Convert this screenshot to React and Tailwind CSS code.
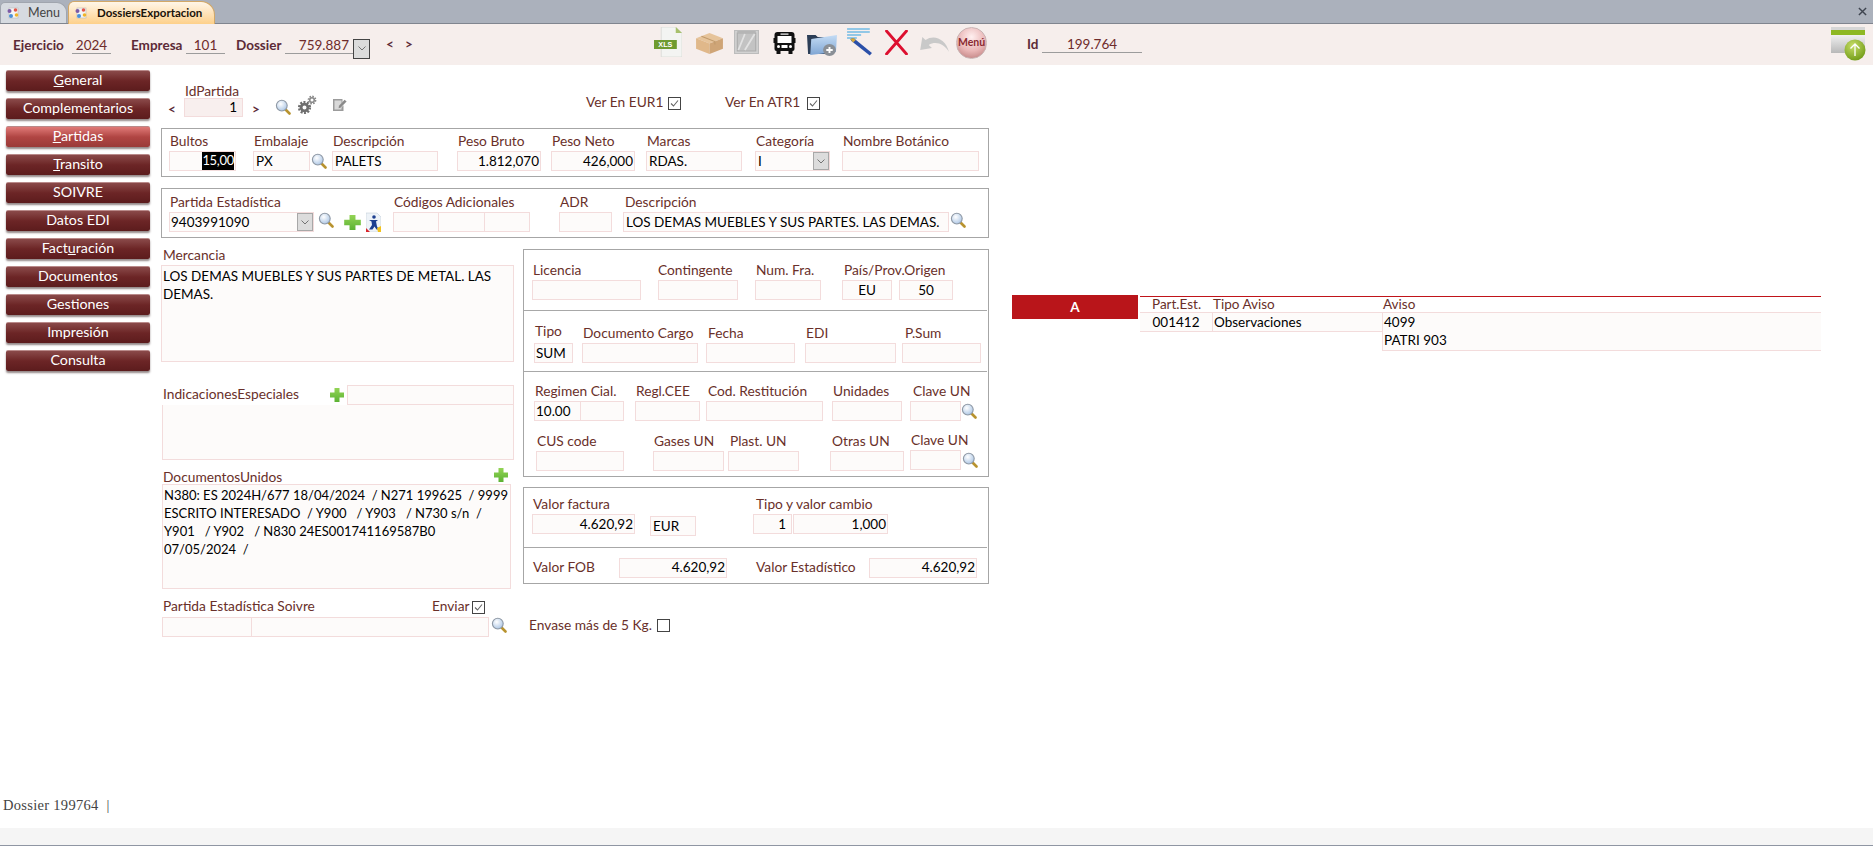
import React from 'react'

const NAV = [
  ['', 'G', 'eneral'], ['Complementarios'], ['', 'P', 'artidas'], ['', 'T', 'ransito'], ['SOIVRE'], ['Datos EDI'],
  ['Fact', 'u', 'ración'], ['Documentos'], ['Gestiones'], ['Impresión'], ['Consulta'],
]

function Lens() {
  return (
    <svg viewBox="0 0 16 16" className="w-[16px] h-[16px] shrink-0">
      <defs>
        <radialGradient id="lensg" cx="40%" cy="35%" r="70%">
          <stop offset="0" stopColor="#ffffff" />
          <stop offset="1" stopColor="#a9c4e4" />
        </radialGradient>
      </defs>
      <line x1="10" y1="10" x2="14.5" y2="14.5" stroke="#b8932f" strokeWidth="2.6" strokeLinecap="round" />
      <circle cx="6.8" cy="6.6" r="5.4" fill="url(#lensg)" stroke="#8f99a5" strokeWidth="1.1" />
    </svg>
  )
}

function GreenPlus({ className = 'w-[16px] h-[16px]' }) {
  return (
    <svg viewBox="0 0 16 16" preserveAspectRatio="none" className={'shrink-0 ' + className}>
      <defs>
        <linearGradient id="plusg" x1="0" y1="0" x2="0" y2="1">
          <stop offset="0" stopColor="#93d455" />
          <stop offset="1" stopColor="#5cb233" />
        </linearGradient>
      </defs>
      <path d="M5.5 1h5v4.5H15v5h-4.5V15h-5v-4.5H1v-5h4.5z" fill="url(#plusg)" />
    </svg>
  )
}

function Gears() {
  return (
    <svg viewBox="0 0 20 20" className="w-[20px] h-[20px] shrink-0">
      <circle cx="7.5" cy="12.5" r="5.5" fill="none" stroke="#6f6f6f" strokeWidth="2.2" strokeDasharray="2 1.46" />
      <circle cx="7.5" cy="12.5" r="3.4" fill="none" stroke="#6f6f6f" strokeWidth="2.8" />
      <circle cx="15" cy="5" r="3.6" fill="none" stroke="#8a8a8a" strokeWidth="1.6" strokeDasharray="1.6 1.2" />
      <circle cx="15" cy="5" r="2.3" fill="none" stroke="#8a8a8a" strokeWidth="1.6" />
    </svg>
  )
}

function EditIcon() {
  return (
    <svg viewBox="0 0 15 15" className="w-[15px] h-[15px] shrink-0">
      <path d="M1 2h9.5v3L7 9l-.6 2.4L9 10.8l2.5-2.5V14H1z" fill="#9b9b9b" />
      <rect x="2.5" y="3.5" width="7" height="9" fill="#d9d9d9" />
      <path d="M6.6 11.3 7 8.8l5.6-6 2 1.8-5.8 6z" fill="#8a8a8a" />
    </svg>
  )
}

function AgencyLogo() {
  return (
    <svg viewBox="0 0 15 20" className="w-[15px] h-[20px] shrink-0">
      <path d="M0 1h11l4 4v15H0z" fill="#eef3f8" stroke="#b9c5d2" strokeWidth="0.5" />
      <circle cx="8" cy="5" r="1.8" fill="#1d3f8f" />
      <path d="M3 8h9l-2 1.5 1 5 2 3h-2.5l-2-3-2 3H3l3-4.5-.5-3.5z" fill="#1d3f8f" />
      <path d="M0 16l4 4H0z" fill="#d8262c" />
      <path d="M11 16l4-2v6h-3z" fill="#f2c21b" />
    </svg>
  )
}

function TabIcon() {
  return (
    <svg viewBox="0 0 14 14" className="w-[14px] h-[14px] shrink-0">
      <rect x="3" y="2" width="9" height="10" fill="#f4f4f4" stroke="#b9b9b9" strokeWidth="0.6" />
      <circle cx="3.5" cy="5" r="2" fill="#7c5aa6" />
      <circle cx="9.5" cy="4" r="1.8" fill="#e2574c" />
      <circle cx="10.5" cy="9" r="1.8" fill="#f0b429" />
      <circle cx="5" cy="10" r="2" fill="#4a90d9" />
    </svg>
  )
}

function CheckBox({ on, className = '' }) {
  return (
    <div className={'w-[13px] h-[13px] border border-[#444] bg-white shrink-0 flex items-center justify-center ' + className}>
      {on && (
        <svg viewBox="0 0 11 11" className="w-[11px] h-[11px]">
          <path d="M2 5.5 4.5 8 9 2.5" fill="none" stroke="#666" strokeWidth="1.1" />
        </svg>
      )}
    </div>
  )
}

function DropBtn({ dark }) {
  return (
    <div className={'h-full shrink-0 flex items-center justify-center bg-[#dcdcdc] ' + (dark ? 'w-[17px] border border-[#444]' : 'w-[16px] border border-[#a8a8a8]')}>
      <svg viewBox="0 0 8 5" className="w-[8px] h-[5px]">
        <path d="M.5.5 4 4 7.500.5" fill="none" stroke="#666" strokeWidth="0.9" />
      </svg>
    </div>
  )
}

// campo de Access: caja rosa pálido
function Inp({ children, className = '' }) {
  return (
    <div className={'h-[20px] border border-[#f3dcdc] bg-[#fdfbfa] text-black flex items-center whitespace-nowrap overflow-hidden ' + className}>
      {children}
    </div>
  )
}

function Label({ children, className = '' }) {
  return <div className={'text-[#69302a] text-[13.75px] whitespace-nowrap ' + className}>{children}</div>
}

function Field({ label, className = '', inpClass = '', children, labelClass = 'pl-[1px]' }) {
  return (
    <div className={'shrink-0 ' + className}>
      <Label className={'h-[14px] leading-[8px] ' + labelClass}>{label}</Label>
      <Inp className={inpClass}>{children}</Inp>
    </div>
  )
}

function HeadField({ children, className = '' }) {
  return <div className={'h-[17px] border-b border-[#9c9c9c] text-[#6e2b2b] leading-[17px] ' + className}>{children}</div>
}

function Divider() {
  return <div className="w-[463px] h-px bg-[#a8a8a8]" />
}

function Toolbar() {
  return (
    <div className="ml-[241px] self-start flex items-start shrink-0 font-normal">
      <svg viewBox="0 0 27 30" preserveAspectRatio="none" className="mt-[3px] w-[28px] h-[30px] shrink-0">
        <path d="M7 0h14l6 6v24H7z" fill="#f3f4f2" stroke="#d4d6d2" strokeWidth="0.7" />
        <path d="M21 0l6 6h-6z" fill="#a7c06c" />
        <rect x="0" y="13" width="22" height="9" fill="#6f9b2f" />
        <text x="11" y="20.500" textAnchor="middle" fontSize="7" fontWeight="700" fill="#fff" fontFamily="Liberation Sans, sans-serif">XLS</text>
      </svg>
      <svg viewBox="0 0 27 24" preserveAspectRatio="none" className="mt-[8px] ml-[13px] w-[29px] h-[23px] shrink-0">
        <path d="M13.500 1 26 6.500 13.500 12 1 6.500z" fill="#e6c49b" />
        <path d="M1 6.500 13.500 12v11L1 17.500z" fill="#e0b88a" />
        <path d="M26 6.500 13.500 12v11L26 17.500z" fill="#cfa577" />
        <path d="M6 4.500 18.500 10v3" fill="none" stroke="#c09a6c" strokeWidth="1" />
      </svg>
      <svg viewBox="0 0 23 24" preserveAspectRatio="none" className="mt-[6px] ml-[10px] w-[25px] h-[24px] shrink-0">
        <rect x="0.500" y="0.500" width="22" height="23" fill="#d2d2d2" stroke="#bcbcbc" />
        <rect x="3" y="3" width="17" height="18" fill="#c3c3c3" stroke="#ababab" />
        <path d="M4 20 10 4M10 20 19 4" stroke="#e2e2e2" strokeWidth="1.6" />
        <rect x="3" y="1" width="17" height="2" fill="#b5b5b5" />
      </svg>
      <svg viewBox="0 0 22 23" className="mt-[7px] ml-[14px] w-[23px] h-[23px] shrink-0">
        <path d="M4 1h14a3 3 0 0 1 3 3v14a2 2 0 0 1-2 2H3a2 2 0 0 1-2-2V4a3 3 0 0 1 3-3z" fill="#111" />
        <rect x="0" y="7" width="2" height="5" fill="#111" />
        <rect x="20" y="7" width="2" height="5" fill="#111" />
        <rect x="4" y="5" width="14" height="7" fill="#fff" />
        <rect x="7" y="2.500" width="8" height="1.200" fill="#fff" />
        <rect x="8" y="14" width="6" height="3" fill="#fff" />
        <circle cx="5" cy="15.500" r="1.500" fill="#fff" />
        <circle cx="17" cy="15.500" r="1.500" fill="#fff" />
        <rect x="3" y="20" width="4" height="3" fill="#111" />
        <rect x="15" y="20" width="4" height="3" fill="#111" />
      </svg>
      <svg viewBox="0 0 28 24" preserveAspectRatio="none" className="mt-[8px] ml-[11px] w-[30px] h-[24px] shrink-0">
        <defs>
          <linearGradient id="foldg" x1="0" y1="0" x2="0" y2="1">
            <stop offset="0" stopColor="#c4dcf5" />
            <stop offset="1" stopColor="#7fa5d3" />
          </linearGradient>
        </defs>
        <path d="M0 3h8l2 2h11v17H1z" fill="#2c3e57" />
        <path d="M3 23 4 7l24-4-1 17z" fill="url(#foldg)" />
        <circle cx="21" cy="18" r="6" fill="#8a8f96" />
        <path d="M18 18h6M21 15v6" stroke="#fff" strokeWidth="1.800" />
      </svg>
      <svg viewBox="0 0 25 28" preserveAspectRatio="none" className="mt-[4px] ml-[9px] w-[27px] h-[28px] shrink-0">
        <path d="M1 1h21M1 4h21M1 7h13M1 10h9" stroke="#2f9fe0" strokeWidth="1.100" />
        <path d="M4 11l3-1 17 15-2 2.500L5 13z" fill="#2b4fa8" />
        <path d="M4 11l3-1 2 2-2.500 2.500z" fill="#d6a93a" />
      </svg>
      <svg viewBox="0 0 24 25" className="mt-[6px] ml-[11px] w-[25px] h-[25px] shrink-0">
        <path d="M2 1 22 24M22 1 2 24" stroke="#dd0f2f" strokeWidth="2.800" strokeLinecap="round" />
      </svg>
      <svg viewBox="0 0 30 20" preserveAspectRatio="none" className="mt-[9px] ml-[8px] w-[32px] h-[20px] shrink-0">
        <path d="M30 19C27 6 16 1 8 7L5 4 3 17l11-2-3-3C17 8 25 10 30 19z" fill="#c9c9c9" />
      </svg>
      <div className="mt-[3px] ml-[7px] w-[31px] h-[32px] rounded-full shrink-0 flex items-center justify-center bg-[radial-gradient(circle_at_50%_30%,#fff0f0_0%,#e9b5b5_55%,#b57474_100%)] border border-[#c9b4b4] text-[10.5px] font-bold text-[#8a2a30]">Menú</div>
    </div>
  )
}

export default function App() {
  return (
    <div className="relative w-[1873px] h-[847px] overflow-hidden bg-white flex flex-col text-[13.5px] [font-family:Lato,sans-serif]">
      {/* pestañas */}
      <div className="h-[24px] shrink-0 bg-[#abb1bc] border-b border-[#80858f] flex items-end relative">
        <div className="w-[67px] h-[21px] rounded-tl-[5px] rounded-tr-[10px] bg-[#d6dae0] border border-[#a0a5ae] border-b-0 flex items-center pl-[5px] gap-[8px] text-[#444] text-[12.5px]">
          <TabIcon />
          Menu
        </div>
        <div className="w-[147px] h-[23px] ml-[1px] -mb-px rounded-tl-[6px] rounded-tr-[14px] bg-gradient-to-b from-[#fff6e8] to-[#fdd08a] border border-[#d3a867] border-b-0 flex items-center pl-[5px] gap-[9px]">
          <TabIcon />
          <span className="font-bold text-[11.5px] text-[#1a1208]">DossiersExportacion</span>
        </div>
        <svg viewBox="0 0 10 10" className="absolute right-[6px] top-[7px] w-[9px] h-[9px]">
          <path d="M1 1l8 8M9 1l-8 8" stroke="#3f4550" strokeWidth="1.600" />
        </svg>
      </div>

      {/* cabecera */}
      <div className="h-[41px] shrink-0 bg-[#f6eeec] flex items-center pl-[13px] font-bold text-[#5c2a37]">
        <span className="w-[59px] pt-[1px]">Ejercicio</span>
        <HeadField className="w-[39px] text-center font-normal mt-[2px]">2024</HeadField>
        <span className="ml-[20px] w-[55px] pt-[1px]">Empresa</span>
        <HeadField className="w-[39px] text-center font-normal mt-[2px]">101</HeadField>
        <span className="ml-[11px] w-[49px] pt-[1px]">Dossier</span>
        <HeadField className="w-[68px] text-right pr-[4px] font-normal mt-[2px]">759.887</HeadField>
        <div className="w-[17px] h-[20px] mt-[8px]">
          <DropBtn dark />
        </div>
        <span className="ml-[16px] w-[19px]">&lt;</span>
        <span className="w-[8px]">&gt;</span>
        <Toolbar />
        <span className="ml-[40px] w-[15px]">Id</span>
        <HeadField className="w-[100px] text-center font-normal">199.764</HeadField>
        <svg viewBox="0 0 38 37" className="ml-[687px] self-start mt-[1px] w-[38px] h-[37px] shrink-0">
          <defs>
            <radialGradient id="upg" cx="40%" cy="30%" r="75%">
              <stop offset="0" stopColor="#c7dd67" />
              <stop offset="1" stopColor="#6f9a16" />
            </radialGradient>
            <linearGradient id="boxg" x1="0" y1="0" x2="0" y2="1">
              <stop offset="0" stopColor="#f0f0f0" />
              <stop offset="1" stopColor="#b8b8b8" />
            </linearGradient>
          </defs>
          <rect x="2" y="2" width="34" height="4" fill="#d6d6d6" />
          <rect x="2" y="5" width="34" height="5" fill="#8db823" />
          <rect x="2" y="10" width="34" height="18" fill="url(#boxg)" />
          <circle cx="26" cy="25" r="10.500" fill="url(#upg)" />
          <path d="M26 31V19M21.500 23.500 26 19l4.500 4.500" fill="none" stroke="#fff" strokeWidth="1.300" />
        </svg>
      </div>

      <div className="flex-1 flex min-h-0">
        {/* botones de navegación */}
        <div className="w-[161px] shrink-0 pt-[5px] pl-[6px] flex flex-col gap-[7px]">
          {NAV.map((n, i) => (
            <div
              key={i}
              className={
                'w-[144px] h-[21px] pb-[2px] rounded-[2px] flex items-center justify-center text-white text-[14.25px] shadow-[0_2px_2px_rgba(60,40,40,0.55)] border-t border-t-[#b98a8a] ' +
                (i === 2 ? 'bg-gradient-to-b from-[#e07a78] via-[#b04543] to-[#9a3a38]' : 'bg-gradient-to-b from-[#8a4a4a] via-[#6c2526] to-[#5c1c1d]')
              }
            >
              {n.length === 1 ? n[0] : <span>{n[0]}<u>{n[1]}</u>{n[2]}</span>}
            </div>
          ))}
        </div>

        {/* formulario */}
        <div className="w-[828px] shrink-0 flex flex-col">
          <div className="h-[63px] flex items-end pb-[11px]">
            <span className="ml-[7px] w-[16px] -mb-[2px] font-bold text-[#5c2a37]">&lt;</span>
            <Field label="IdPartida" className="w-[59px]" labelClass="pl-[1px] mt-[3px] -mb-[3px]" inpClass="!h-[19px] !bg-[#f8efee] justify-end pr-[5px]">1</Field>
            <span className="ml-[9px] w-[15px] -mb-[2px] font-bold text-[#5c2a37]">&gt;</span>
            <div className="ml-[8px] mb-[2px]"><Lens /></div>
            <div className="ml-[6px] mb-[2px]"><Gears /></div>
            <div className="ml-[15px] mb-[5px]"><EditIcon /></div>
            <div className="ml-[239px] w-[82px] mb-[4px] text-[#69302a] text-[13.75px]">Ver En EUR1</div>
            <CheckBox on className="mb-[7px]" />
            <div className="ml-[44px] w-[82px] mb-[4px] text-[#69302a] text-[13.75px]">Ver En ATR1</div>
            <CheckBox on className="mb-[7px]" />
          </div>

          <div className="h-[49px] border border-[#a6a6a6] pt-[8px] flex items-end pb-[5px]">
            <Field label="Bultos" className="ml-[7px] w-[67px]" inpClass="justify-end pr-[1px]">
              <span className="bg-black text-white text-[13px] tracking-[-0.3px]">15,00</span>
            </Field>
            <Field label="Embalaje" className="ml-[17px] w-[57px]" inpClass="px-[2px]">PX</Field>
            <div className="ml-[1px] w-[15px] mb-[2px]"><Lens /></div>
            <Field label="Descripción" className="ml-[6px] w-[106px]" inpClass="px-[2px]">PALETS</Field>
            <Field label="Peso Bruto" className="ml-[19px] w-[84px]" inpClass="justify-end pr-[1px]">1.812,070</Field>
            <Field label="Peso Neto" className="ml-[10px] w-[84px]" inpClass="justify-end pr-[1px]">426,000</Field>
            <Field label="Marcas" className="ml-[11px] w-[96px]" inpClass="px-[2px]">RDAS.</Field>
            <Field label="Categoría" className="ml-[13px] w-[75px]" inpClass="pl-[2px]">
              <span className="flex-1">I</span>
              <DropBtn />
            </Field>
            <Field label="Nombre Botánico" className="ml-[12px] w-[137px]" />
          </div>

          <div className="mt-[11px] h-[50px] border border-[#a6a6a6] pt-[9px] flex items-start">
            <Field label="Partida Estadística" className="ml-[7px] w-[145px]" inpClass="pl-[1px]">
              <span className="flex-1">9403991090</span>
              <DropBtn />
            </Field>
            <div className="ml-[4px] mt-[14px]"><Lens /></div>
            <div className="ml-[9px] mt-[16px]"><GreenPlus className="w-[19px] h-[17px]" /></div>
            <div className="ml-[4px] mt-[14px]"><AgencyLogo /></div>
            <div className="ml-[12px] w-[137px] shrink-0">
              <Label className="h-[14px] leading-[8px] pl-[1px]">Códigos Adicionales</Label>
              <div className="flex">
                <Inp className="w-[46px]" />
                <Inp className="w-[46px] border-l-0" />
                <Inp className="w-[45px] border-l-0" />
              </div>
            </div>
            <Field label="ADR" className="ml-[29px] w-[53px]" />
            <Field label="Descripción" className="ml-[11px] w-[326px]" inpClass="px-[2px]" labelClass="pl-[2px]">LOS DEMAS MUEBLES Y SUS PARTES. LAS DEMAS.</Field>
            <div className="ml-[1px] mt-[14px]"><Lens /></div>
          </div>

          <div className="flex">
            {/* columna izquierda */}
            <div className="w-[353px] shrink-0 pt-[13px]">
              <Label className="h-[14px] leading-[8px] pl-[2px]">Mercancia</Label>
              <div className="w-[353px] h-[97px] border border-[#f3dcdc] bg-[#fdfbfa] text-black px-[1px] pt-[1px] leading-[18px]">
                LOS DEMAS MUEBLES Y SUS PARTES DE METAL. LAS DEMAS.
              </div>
              <div className="mt-[23px] flex items-center h-[20px]">
                <Label className="w-[168px] pl-[2px] pb-[2px]">IndicacionesEspeciales</Label>
                <GreenPlus />
                <Inp className="ml-[2px] w-[167px]" />
              </div>
              <div className="ml-[1px] w-[352px] h-[55px] border border-[#f3dcdc] border-t-0 bg-[#fdfbfa]" />
              <div className="flex h-[24px]">
                <Label className="w-[332px] pl-[2px] pt-[7px]">DocumentosUnidos</Label>
                <div className="mt-[7px]"><GreenPlus /></div>
              </div>
              <div className="ml-[1px] w-[349px] h-[105px] border border-[#f3dcdc] bg-[#fdfbfa] text-black text-[13px] whitespace-nowrap overflow-hidden px-[1px] pt-[1px] leading-[18px]">
                N380: ES 2024H/677 18/04/2024&nbsp; / N271 199625&nbsp; / 9999<br />
                ESCRITO INTERESADO&nbsp; / Y900&nbsp;&nbsp; / Y903&nbsp;&nbsp; / N730 s/n&nbsp; /<br />
                Y901&nbsp;&nbsp; / Y902&nbsp;&nbsp; / N830 24ES001741169587B0<br />
                07/05/2024&nbsp; /
              </div>
              <div className="flex h-[28px]">
                <Label className="w-[271px] pl-[2px] pt-[7px]">Partida Estadística Soivre</Label>
                <Label className="w-[40px] pt-[7px]">Enviar</Label>
                <CheckBox on className="mt-[12px]" />
              </div>
              <div className="flex ml-[1px]">
                <Inp className="w-[90px]" />
                <Inp className="w-[237px] border-l-0" />
                <div className="ml-[2px]"><Lens /></div>
              </div>
            </div>

            {/* columna derecha */}
            <div className="ml-[9px] w-[466px] shrink-0 pt-[11px]">
              <div className="h-[228px] border border-[#a6a6a6]">
                <div className="flex pt-[16px] pb-[10px]">
                  <Field label="Licencia" className="ml-[8px] w-[109px]" />
                  <Field label="Contingente" className="ml-[17px] w-[80px]" labelClass="" />
                  <Field label="Num. Fra." className="ml-[17px] w-[66px]" />
                  <Field label="País/Prov.Origen" className="ml-[21px] w-[50px]" labelClass="pl-[2px]" inpClass="justify-center">EU</Field>
                  <Field label="" className="ml-[7px] w-[54px]" inpClass="justify-center">50</Field>
                </div>
                <Divider />
                <div className="flex pt-[18px] pb-[8px]">
                  <Field label="Tipo" className="ml-[10px] w-[39px]" inpClass="px-[1px]" labelClass="pl-[1px] -mt-[2px] mb-[2px]">SUM</Field>
                  <Field label="Documento Cargo" className="ml-[9px] w-[116px]" />
                  <Field label="Fecha" className="ml-[8px] w-[89px]" labelClass="pl-[2px]" />
                  <Field label="EDI" className="ml-[10px] w-[91px]" />
                  <Field label="P.Sum" className="ml-[6px] w-[79px]" labelClass="pl-[3px]" />
                </div>
                <Divider />
                <div className="flex pt-[15px]">
                  <div className="ml-[10px] w-[90px] shrink-0">
                    <Label className="h-[14px] leading-[8px] pl-[1px]">Regimen Cial.</Label>
                    <div className="flex">
                      <Inp className="w-[47px] px-[1px]">10.00</Inp>
                      <Inp className="w-[43px] border-l-0" />
                    </div>
                  </div>
                  <Field label="Regl.CEE" className="ml-[11px] w-[65px]" />
                  <Field label="Cod. Restitución" className="ml-[6px] w-[117px]" labelClass="pl-[2px]" />
                  <Field label="Unidades" className="ml-[9px] w-[70px]" />
                  <Field label="Clave UN" className="ml-[8px] w-[51px]" labelClass="pl-[3px]" />
                  <div className="mt-[16px]"><Lens /></div>
                </div>
                <div className="flex pt-[16px]">
                  <Field label="CUS code" className="ml-[12px] w-[88px]" />
                  <Field label="Gases UN" className="ml-[29px] w-[71px]" />
                  <Field label="Plast. UN" className="ml-[4px] w-[71px]" labelClass="pl-[2px]" />
                  <Field label="Otras UN" className="ml-[31px] w-[74px]" labelClass="pl-[2px]" />
                  <Field label="Clave UN" className="ml-[6px] w-[51px] -mt-[1px]" />
                  <div className="ml-[1px] mt-[15px]"><Lens /></div>
                </div>
              </div>

              <div className="mt-[10px] h-[97px] border border-[#a6a6a6]">
                <div className="flex pt-[12px] pb-[11px]">
                  <Field label="Valor factura" className="ml-[8px] w-[103px]" inpClass="justify-end pr-[1px]">4.620,92</Field>
                  <Inp className="ml-[15px] w-[46px] mt-[16px] px-[2px]">EUR</Inp>
                  <Field label="Tipo y valor cambio" className="ml-[57px] w-[39px]" labelClass="pl-[3px]" inpClass="justify-end pr-[5px]">1</Field>
                  <Inp className="ml-[1px] w-[95px] mt-[14px] justify-end pr-[1px]">1,000</Inp>
                </div>
                <Divider />
                <div className="flex items-start pt-[10px]">
                  <Label className="ml-[9px] w-[86px] -mt-[1px]">Valor FOB</Label>
                  <Inp className="w-[108px] justify-end pr-[1px] pb-[1px]">4.620,92</Inp>
                  <Label className="ml-[29px] w-[113px] -mt-[1px]">Valor Estadístico</Label>
                  <Inp className="w-[108px] justify-end pr-[1px] pb-[1px]">4.620,92</Inp>
                </div>
              </div>

              <div className="mt-[31px] ml-[6px] flex items-center">
                <Label className="w-[128px]">Envase más de 5 Kg.</Label>
                <CheckBox />
              </div>
            </div>
          </div>
        </div>

        {/* avisos */}
        <div className="ml-[23px] pt-[230px] flex items-start">
          <div className="w-[126px] h-[24px] bg-[#b9151a] text-white font-bold flex items-center justify-center">A</div>
          <div className="ml-[2px] w-[681px] border-t border-[#c0141a] mt-[1px]">
            <div className="flex h-[16px] leading-[14px] border-b border-[#f3dcdc] text-[#69302a]">
              <span className="w-[73px] pl-[12px] whitespace-nowrap">Part.Est.</span>
              <span className="w-[170px] whitespace-nowrap">Tipo Aviso</span>
              <span>Aviso</span>
            </div>
            <div className="flex text-black">
              <div className="w-[242px] h-[19px] flex border-b border-[#f3dcdc] bg-[#fdfbfa]">
                <span className="w-[72px] text-center leading-[18px]">001412</span>
                <span className="pl-[1px] border-l border-[#f3dcdc] leading-[18px]">Observaciones</span>
              </div>
              <div className="flex-1 h-[38px] border-l border-b border-[#f3dcdc] bg-[#fdfbfa] pl-[1px] leading-[18px]">
                4099<br />PATRI 903
              </div>
            </div>
          </div>
        </div>
      </div>

      {/* pie */}
      <div className="h-[31px] shrink-0 pl-[3px] pb-[14px] text-[14.5px] text-[#444] [font-family:'Liberation_Serif',serif] flex items-center tracking-[0.3px]">
        Dossier 199764&nbsp;&nbsp;|
      </div>
      <div className="h-[17px] shrink-0 bg-[#f5f5f5]" />
      <div className="h-[2px] shrink-0 border-t border-[#8f96a3] bg-white" />
    </div>
  )
}
